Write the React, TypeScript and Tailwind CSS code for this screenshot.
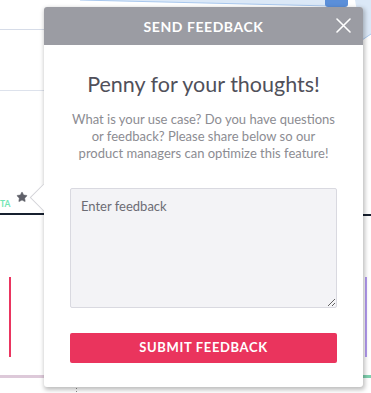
import { Star } from "lucide-react"

// bits of the chart that sit behind the popover
const Backdrop = () => {
    return (
        <svg className="absolute inset-0" width="371" height="393" viewBox="0 0 371 393">
            <polygon points="77,0 330,0 330,6" fill="#dbe8f7" />
            <line x1="80" y1="0" x2="330" y2="6" stroke="#a9c8ee" strokeWidth="1" />
            <polygon points="355,0 371,0 371,34 362,40" fill="#dbe8f7" />
            <line x1="362" y1="40" x2="371" y2="34" stroke="#a9c8ee" strokeWidth="1" />
            <rect x="325" y="-4" width="23" height="11" rx="3" fill="#5b8fd9" />
            <rect x="0" y="29" width="44" height="1" fill="#d6dce8" />
            <rect x="0" y="90" width="44" height="1" fill="#dde2ec" />
            <rect x="0" y="213" width="44" height="2" fill="#17202f" />
            <rect x="363" y="214" width="8" height="2" fill="#17202f" />
            <rect x="9" y="277" width="2" height="80" fill="#ea3560" />
            <rect x="365" y="277" width="2" height="80" fill="#b39af0" />
            <rect x="0" y="375" width="44" height="3" fill="#ddc9d9" />
            <rect x="363" y="375" width="8" height="3" fill="#7ed0ae" />
            <line x1="76.5" y1="388" x2="76.5" y2="393" stroke="#888" strokeWidth="1" strokeDasharray="1 2" />
            <text x="0" y="207" fontSize="8.5" fontWeight="700" fill="#73e6b4" fontFamily="Lato, sans-serif">TA</text>
        </svg>
    )
}

const FeedbackPopover = () => {
    return (
        <div className="absolute left-[44px] top-[7px] w-[319px] h-[380px] bg-white rounded-[3px] shadow-[1px_2px_4px_1px_rgba(0,0,0,0.25)]">
            {/* arrow pointing at the star */}
            <div className="absolute left-[-15px] top-[176px] h-[30px] w-[15px] overflow-hidden">
                <div className="absolute left-[5px] top-[4px] h-[21px] w-[21px] rotate-45 border border-[#d4d4d8] bg-white" />
            </div>
            <div className="relative flex h-[38px] items-center justify-center rounded-t-[3px] bg-[#9b9ca3]">
                <span className="text-[14px] font-bold tracking-[0.04em] text-white">SEND FEEDBACK</span>
                <button className="absolute right-[12px] top-[11px] text-white">
                    <svg width="15" height="15" viewBox="0 0 15 15">
                        <path d="M1 1 14 14M14 1 1 14" stroke="currentColor" strokeWidth="1.6" strokeLinecap="round" />
                    </svg>
                </button>
            </div>
            <div className="flex flex-col items-center px-[26px]">
                <h2 className="mt-[24px] text-[21.5px] leading-[30px] text-[#50505a]">Penny for your thoughts!</h2>
                <p className="mt-[12px] max-w-[266px] text-center text-[13px] leading-[17px] text-[#8c8c92]">
                    What is your use case? Do you have questions or feedback? Please share below so our product managers can optimize this feature!
                </p>
                <textarea
                    placeholder="Enter feedback"
                    className="mt-[26px] h-[120px] w-full resize-y rounded-[2px] border border-[#d9d9e0] bg-[#f3f3f6] px-[10px] pt-[7px] pb-[10px] text-[13px] leading-[20px] text-[#555] placeholder:text-[#6c6c74] outline-none"
                />
                <button className="mt-[25px] h-[30px] w-full rounded-[2px] bg-[#ea345d] text-[13px] font-bold tracking-[0.05em] text-white">
                    SUBMIT FEEDBACK
                </button>
            </div>
        </div>
    )
}

export default function App() {
    return (
        <div className="relative h-[393px] w-[371px] overflow-hidden bg-white font-['Lato',sans-serif]">
            <Backdrop />
            <Star className="absolute left-[16px] top-[191px] text-[#5f6069]" size={12} fill="#5f6069" strokeWidth={1} />
            <FeedbackPopover />
        </div>
    )
}
